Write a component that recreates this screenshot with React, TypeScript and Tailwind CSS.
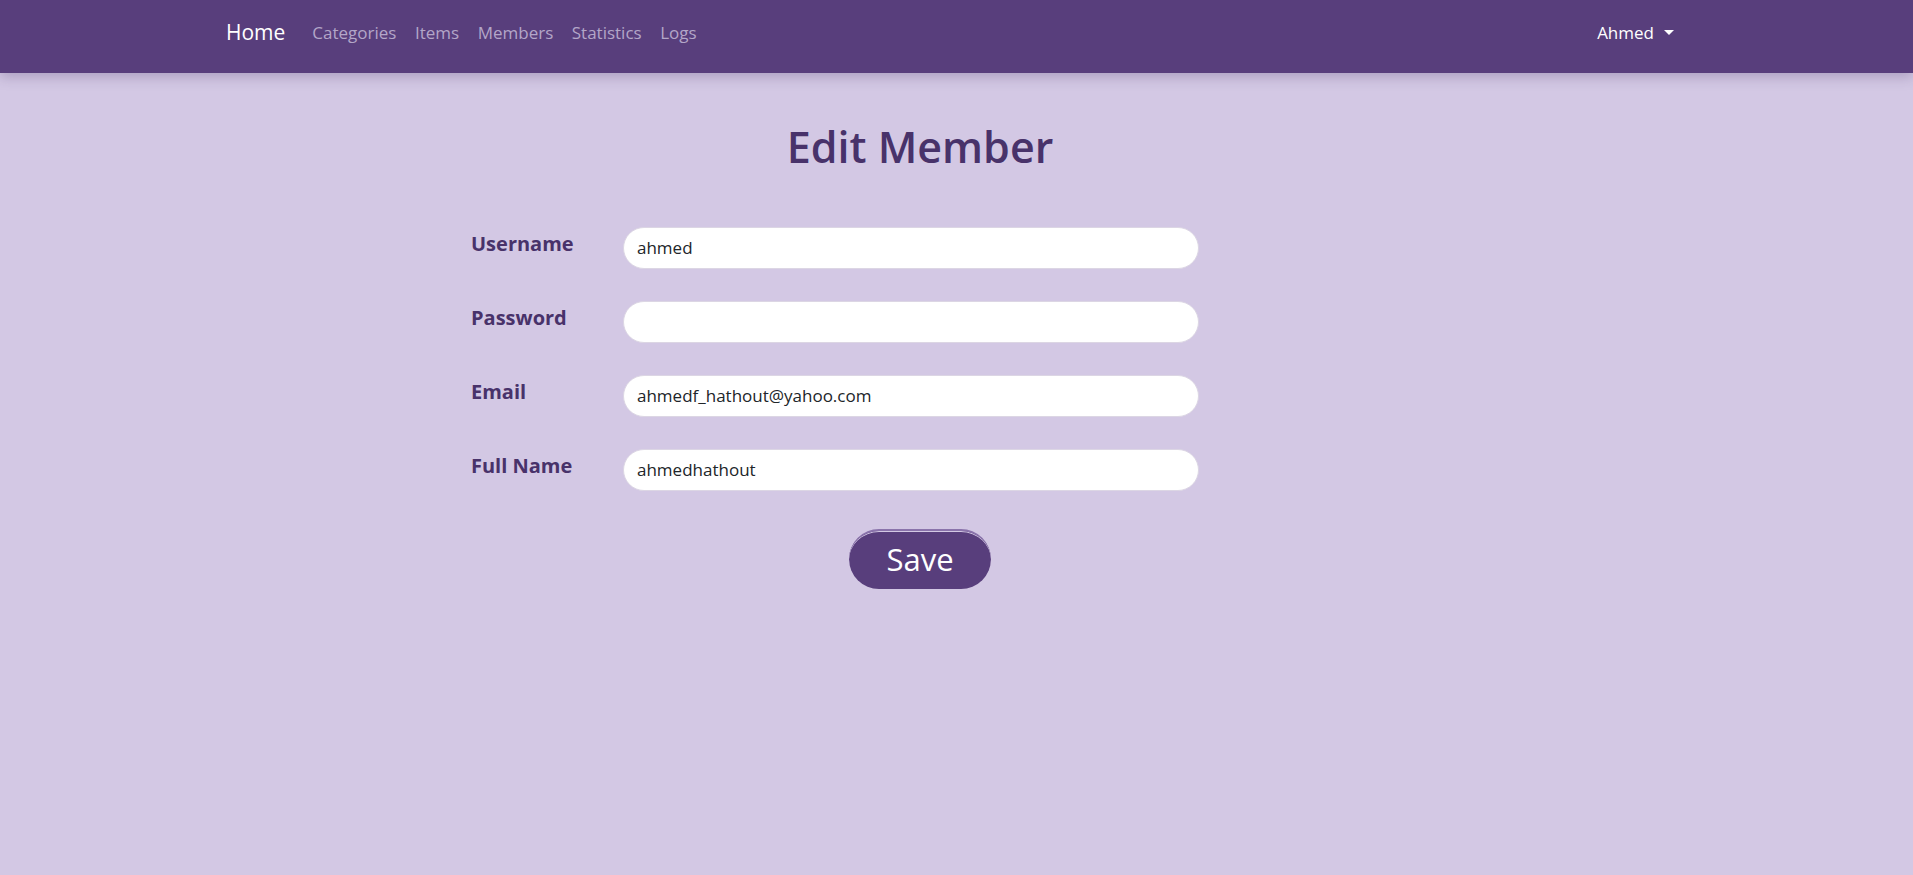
import React from 'react';

const links = ['Categories', 'Items', 'Members', 'Statistics', 'Logs'];

const fields = [
  { label: 'Username', value: 'ahmed', type: 'text' },
  { label: 'Password', value: '', type: 'password' },
  { label: 'Email', value: 'ahmedf_hathout@yahoo.com', type: 'email' },
  { label: 'Full Name', value: 'ahmedhathout', type: 'text' },
];

export default function App() {
  return (
    <div className="min-h-[875px] bg-[#d3c8e4] font-['Open_Sans',sans-serif]">
      <nav className="h-[73px] bg-[#583e7c] shadow-[0_4px_12px_rgba(60,40,90,0.25)]">
        <div className="flex h-full items-center pb-[8px] pl-[226px] pr-[239px]">
          <a className="mr-[27px] text-[21px] text-white">Home</a>
          <ul className="flex gap-[18.5px] text-[17px] text-[#b3a6c8]">
            {links.map((l) => (
              <li key={l}>{l}</li>
            ))}
          </ul>
          <div className="ml-auto flex items-center gap-[10px] text-[17px] text-white">
            Ahmed
            <span className="h-0 w-0 border-x-[5px] border-t-[5px] border-x-transparent border-t-white" />
          </div>
        </div>
      </nav>

      <main className="pl-[471px]">
        <div className="w-[898px]">
          <h1 className="pt-[48px] text-center text-[43px] font-semibold leading-[1.2] text-[#48326a]">
            Edit Member
          </h1>
          <form className="mt-[54px] flex flex-col gap-[32px]">
            {fields.map((f) => (
              <div key={f.label} className="flex items-start">
                <label className="w-[152px] pt-[2px] text-[20px] font-bold text-[#48326a]">
                  {f.label}
                </label>
                <input
                  type={f.type}
                  defaultValue={f.value}
                  className="h-[42px] w-[576px] rounded-full border border-[#dcd6e4] bg-white px-[13px] text-[17px] text-[#212529] outline-none"
                />
              </div>
            ))}
            <div className="mt-[6px] flex justify-center">
              <button
                type="button"
                className="h-[60px] w-[142px] rounded-full border-t-2 border-[#8a73ab] bg-[#583e7c] text-[31px] text-white shadow-[inset_0_1px_0_#d3c8e4]"
              >
                Save
              </button>
            </div>
          </form>
        </div>
      </main>
    </div>
  );
}
